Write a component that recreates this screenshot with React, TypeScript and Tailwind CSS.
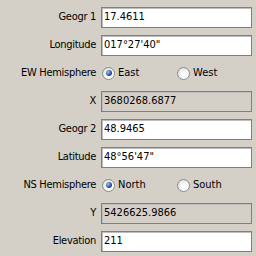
import React from "react";

type Row =
  | { kind: "input"; label: string; value: string; readOnly?: boolean }
  | { kind: "radio"; label: string; options: [string, string]; selected: number };

const rows: Row[] = [
  { kind: "input", label: "Geogr 1", value: "17.4611" },
  { kind: "input", label: "Longitude", value: "017°27'40\"" },
  { kind: "radio", label: "EW Hemisphere", options: ["East", "West"], selected: 0 },
  { kind: "input", label: "X", value: "3680268.6877", readOnly: true },
  { kind: "input", label: "Geogr 2", value: "48.9465" },
  { kind: "input", label: "Latitude", value: "48°56'47\"" },
  { kind: "radio", label: "NS Hemisphere", options: ["North", "South"], selected: 0 },
  { kind: "input", label: "Y", value: "5426625.9866", readOnly: true },
  { kind: "input", label: "Elevation", value: "211" },
];

function Radio({ checked, label }: { checked: boolean; label: string }) {
  return (
    <div className="flex items-center gap-[3px]">
      <span className="w-[13px] h-[13px] rounded-full border border-[#8a8c8c] bg-[radial-gradient(circle_at_65%_70%,#ffffff_25%,#d6d6d0_100%)] flex items-center justify-center">
        {checked && (
          <span className="w-[6px] h-[6px] rounded-full bg-[radial-gradient(circle_at_35%_35%,#a8c2f0,#2a4a9e_60%,#1a2f7a)]" />
        )}
      </span>
      <span>{label}</span>
    </div>
  );
}

export default function App() {
  return (
    <div
      className="w-[256px] h-[256px] bg-[#d4d0c8] text-black text-[11px] pt-[3px] pr-[4px]"
      style={{ fontFamily: '"DejaVu Sans Condensed", "Liberation Sans", sans-serif' }}
    >
      {rows.map((row) => (
        <div key={row.label} className="flex items-center h-[28px]">
          <div className="w-[101px] shrink-0 pr-[5px] text-right whitespace-nowrap tracking-[-0.3px]">
            {row.label}
          </div>
          {row.kind === "input" ? (
            <div
              className={`flex-1 h-[21px] border border-[#7f7f7f] shadow-[inset_1px_1px_0_#bdbdbd] flex items-center pl-[2px] ${
                row.readOnly ? "bg-[#d4d0c8]" : "bg-white"
              }`}
            >
              {row.value}
            </div>
          ) : (
            <div className="flex-1 flex pl-[1px]">
              <div className="w-[75px]">
                <Radio checked={row.selected === 0} label={row.options[0]} />
              </div>
              <Radio checked={row.selected === 1} label={row.options[1]} />
            </div>
          )}
        </div>
      ))}
    </div>
  );
}
